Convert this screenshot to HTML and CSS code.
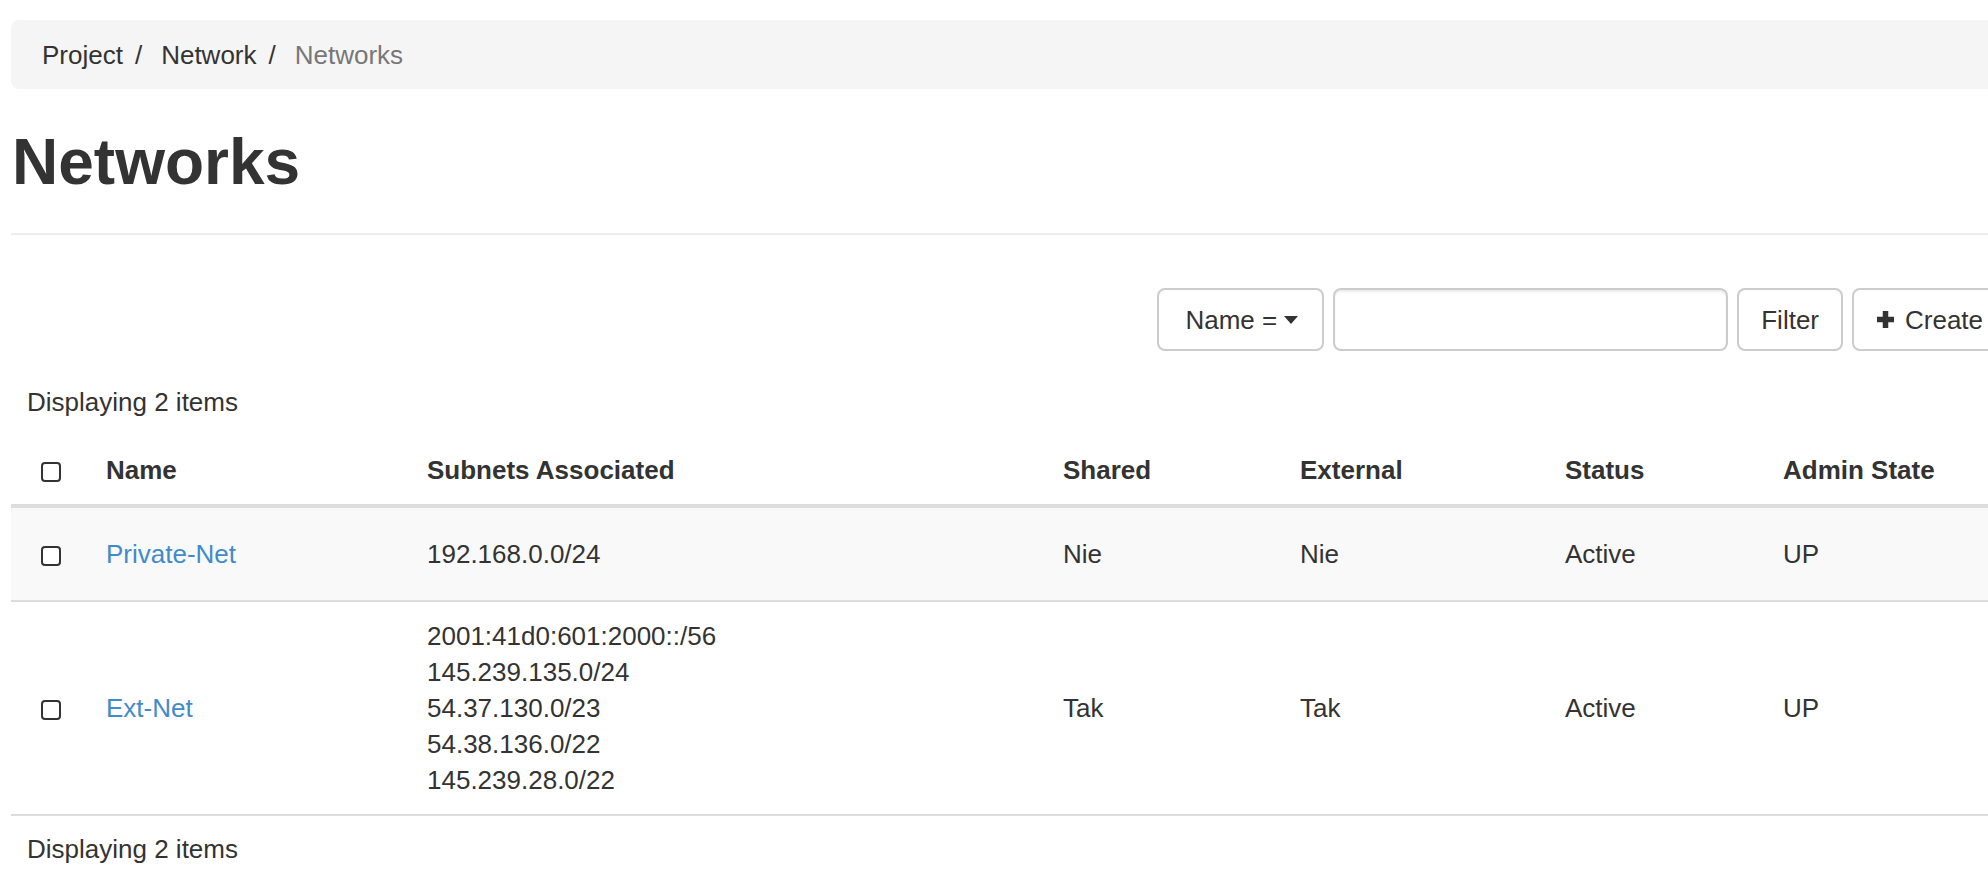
FILE: index.html
```html
<!DOCTYPE html>
<html lang="en">
<head>
<meta charset="utf-8">
<title>Networks</title>
<link rel="stylesheet" href="styles.css">
</head>
<body>
<div class="page">
  <ol class="breadcrumb">
    <li>Project</li>
    <li>Network</li>
    <li class="active">Networks</li>
  </ol>

  <div class="page-header">
    <h1>Networks</h1>
  </div>

  <div class="toolbar">
    <button class="btn btn-dropdown" type="button">Name = <span class="caret"></span></button>
    <input class="filter-input" type="text" aria-label="Filter">
    <button class="btn" type="button">Filter</button>
    <button class="btn btn-create" type="button"><svg class="plus" width="17" height="17" viewBox="0 0 17 17"><rect x="5.75" y="0" width="5.5" height="17"/><rect x="0" y="5.75" width="17" height="5.5"/></svg>Create</button>
  </div>

  <table class="table">
    <colgroup>
      <col class="c-check">
      <col class="c-name">
      <col class="c-subnets">
      <col class="c-shared">
      <col class="c-external">
      <col class="c-status">
      <col class="c-admin">
    </colgroup>
    <caption>Displaying 2 items</caption>
    <thead>
      <tr>
        <th class="check"><input type="checkbox" class="cb" aria-label="Select all"></th>
        <th>Name</th>
        <th>Subnets Associated</th>
        <th>Shared</th>
        <th>External</th>
        <th>Status</th>
        <th>Admin State</th>
      </tr>
    </thead>
    <tbody>
      <tr class="row-odd">
        <td class="check"><input type="checkbox" class="cb" aria-label="Select Private-Net"></td>
        <td><a href="#">Private-Net</a></td>
        <td>192.168.0.0/24</td>
        <td>Nie</td>
        <td>Nie</td>
        <td>Active</td>
        <td>UP</td>
      </tr>
      <tr>
        <td class="check"><input type="checkbox" class="cb" aria-label="Select Ext-Net"></td>
        <td><a href="#">Ext-Net</a></td>
        <td>
          <ul class="subnets">
            <li>2001:41d0:601:2000::/56</li>
            <li>145.239.135.0/24</li>
            <li>54.37.130.0/23</li>
            <li>54.38.136.0/22</li>
            <li>145.239.28.0/22</li>
          </ul>
        </td>
        <td>Tak</td>
        <td>Tak</td>
        <td>Active</td>
        <td>UP</td>
      </tr>
    </tbody>
  </table>
  <div class="footer-count">Displaying 2 items</div>
</div>
</body>
</html>
```

FILE: styles.css
```css
html, body {
  margin: 0;
  padding: 0;
  background: #fff;
  overflow: hidden;
}

body {
  font-family: "Liberation Sans", Arial, Helvetica, sans-serif;
  font-size: 26px;
  line-height: 36px;
  color: #333;
}

.page {
  width: 2102px;
  margin-left: 11px;
  padding-top: 20px;
}

/* Breadcrumb */
.breadcrumb {
  list-style: none;
  margin: 0;
  height: 69px;
  padding: 0 31px;
  background: #f5f5f5;
  border-radius: 8px;
  display: flex;
  align-items: center;
}

.breadcrumb li + li::before {
  content: "/";
  color: #333;
  margin: 0 19px 0 12px;
}

.breadcrumb .active {
  color: #777;
}

/* Header */
.page-header {
  margin-top: 33px;
  padding-bottom: 31px;
  border-bottom: 2px solid #eee;
}

.page-header h1 {
  margin: 0;
  font-size: 64px;
  line-height: 80px;
  font-weight: bold;
  color: #333;
  padding-left: 1px;
}

/* Toolbar */
.toolbar {
  margin-top: 53px;
  display: flex;
  justify-content: flex-end;
  align-items: center;
  gap: 9px;
}

.btn {
  height: 63px;
  box-sizing: border-box;
  border: 2px solid #ccc;
  border-radius: 8px;
  background: #fff;
  color: #333;
  font-family: inherit;
  font-size: 26px;
  line-height: 36px;
  padding: 0 22px;
  display: flex;
  align-items: center;
}

.btn-dropdown {
  padding: 0 24px 0 26px;
}

.caret {
  display: inline-block;
  width: 0;
  height: 0;
  margin-left: 7px;
  border-top: 8px solid #333;
  border-left: 7px solid transparent;
  border-right: 7px solid transparent;
}

.filter-input {
  width: 395px;
  height: 63px;
  box-sizing: border-box;
  border: 2px solid #ccc;
  border-radius: 8px;
  box-shadow: inset 0 2px 2px rgba(0, 0, 0, 0.075);
  font-family: inherit;
  font-size: 26px;
  padding: 0 16px;
  margin: 0;
}

.btn-create {
  width: 261px;
  padding: 0 23px;
}

.plus {
  fill: #333;
  margin-right: 11px;
  flex: none;
}

/* Table */
.table {
  width: 100%;
  border-collapse: collapse;
  table-layout: fixed;
}

.c-check { width: 79px; }
.c-name { width: 321px; }
.c-subnets { width: 636px; }
.c-shared { width: 237px; }
.c-external { width: 265px; }
.c-status { width: 218px; }

.table caption {
  text-align: left;
  padding: 33px 16px 16px;
}

.table th,
.table td {
  padding: 16px;
  text-align: left;
  vertical-align: middle;
}

.table th {
  font-weight: bold;
  border-bottom: 4px solid #ddd;
}

.table td {
  border-bottom: 2px solid #ddd;
}

.table .row-odd td {
  background: #f9f9f9;
  padding-top: 28px;
  padding-bottom: 28px;
}

.table .check {
  text-align: center;
}

.cb {
  appearance: none;
  -webkit-appearance: none;
  width: 20px;
  height: 20px;
  margin: 0;
  border: 2px solid #333;
  border-radius: 4px;
  background: #fff;
  vertical-align: middle;
  display: inline-block;
}

.table a {
  color: #428bca;
  text-decoration: none;
}

.subnets {
  list-style: none;
  margin: 0;
  padding: 0;
}

.footer-count {
  padding: 15px 16px;
}
```
